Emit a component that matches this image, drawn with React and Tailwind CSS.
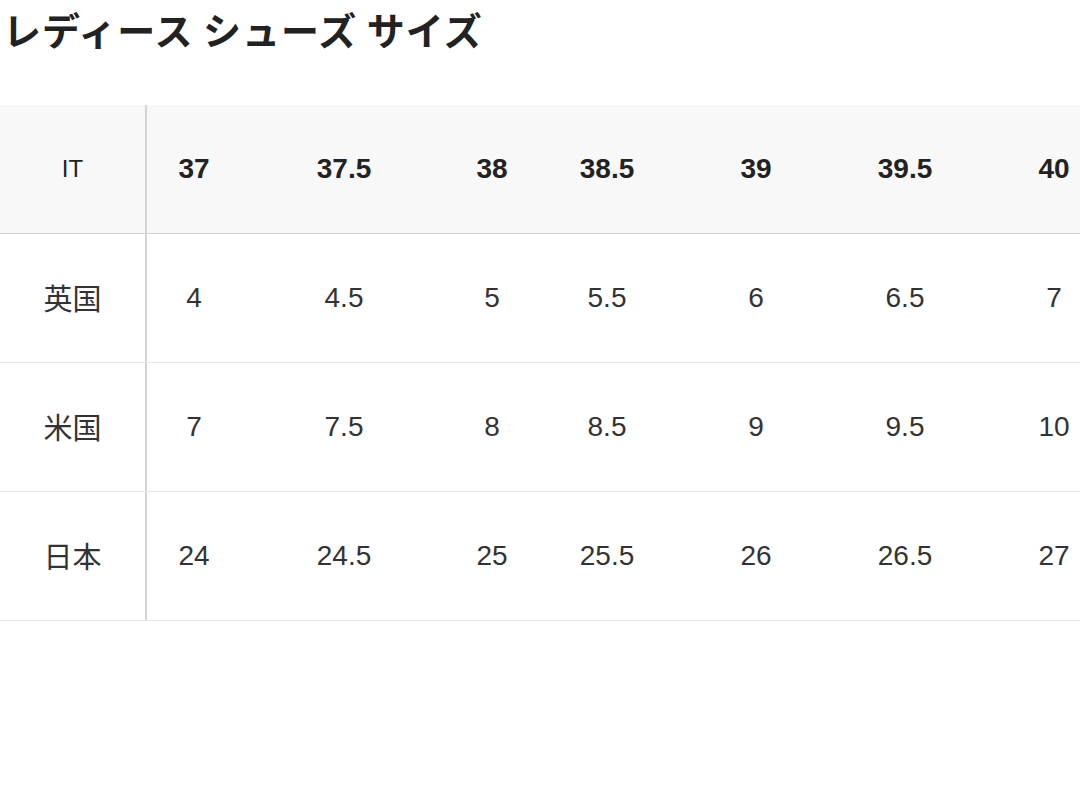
const colWidths = ["w-[94px]", "w-[206px]", "w-[90px]", "w-[140px]", "w-[158px]", "w-[140px]", "w-[158px]"];

const header = ["37", "37.5", "38", "38.5", "39", "39.5", "40"];
const rows = [
  { label: "英国", values: ["4", "4.5", "5", "5.5", "6", "6.5", "7"] },
  { label: "米国", values: ["7", "7.5", "8", "8.5", "9", "9.5", "10"] },
  { label: "日本", values: ["24", "24.5", "25", "25.5", "26", "26.5", "27"] },
];

const App = () => {
  return (
    <div className="w-[1080px] h-[810px] bg-white overflow-hidden text-[#222]">
      <h1 className="pl-[3px] pt-[4px] text-[38px] leading-[50px] tracking-[1px] font-bold font-['Noto_Sans_CJK_JP',sans-serif]">
        レディース シューズ サイズ
      </h1>

      <div className="mt-[51px] w-[1133px] font-['Liberation_Sans',Arial,sans-serif]">
        {/* header row */}
        <div className="flex h-[129px] bg-[#f8f8f8] border-b border-[#d2d2d2]">
          <div className="w-[147px] shrink-0 border-r-2 border-[#d4d4d4] flex items-center justify-center text-[24px]">
            IT
          </div>
          {header.map((h, i) => (
            <div key={i} className={`shrink-0 flex items-center justify-center text-[28px] font-bold ${colWidths[i]}`}>
              {h}
            </div>
          ))}
        </div>

        {rows.map((r) => (
          <div key={r.label} className="flex h-[129px] border-b border-[#e6e6e6]">
            <div className="w-[147px] shrink-0 border-r-2 border-[#d4d4d4] flex items-center justify-center text-[29px] text-[#333] font-['Noto_Sans_CJK_JP',sans-serif]">
              {r.label}
            </div>
            {r.values.map((v, i) => (
              <div key={i} className={`shrink-0 flex items-center justify-center text-[28px] text-[#333] ${colWidths[i]}`}>
                {v}
              </div>
            ))}
          </div>
        ))}
      </div>
    </div>
  );
};

export default App;
